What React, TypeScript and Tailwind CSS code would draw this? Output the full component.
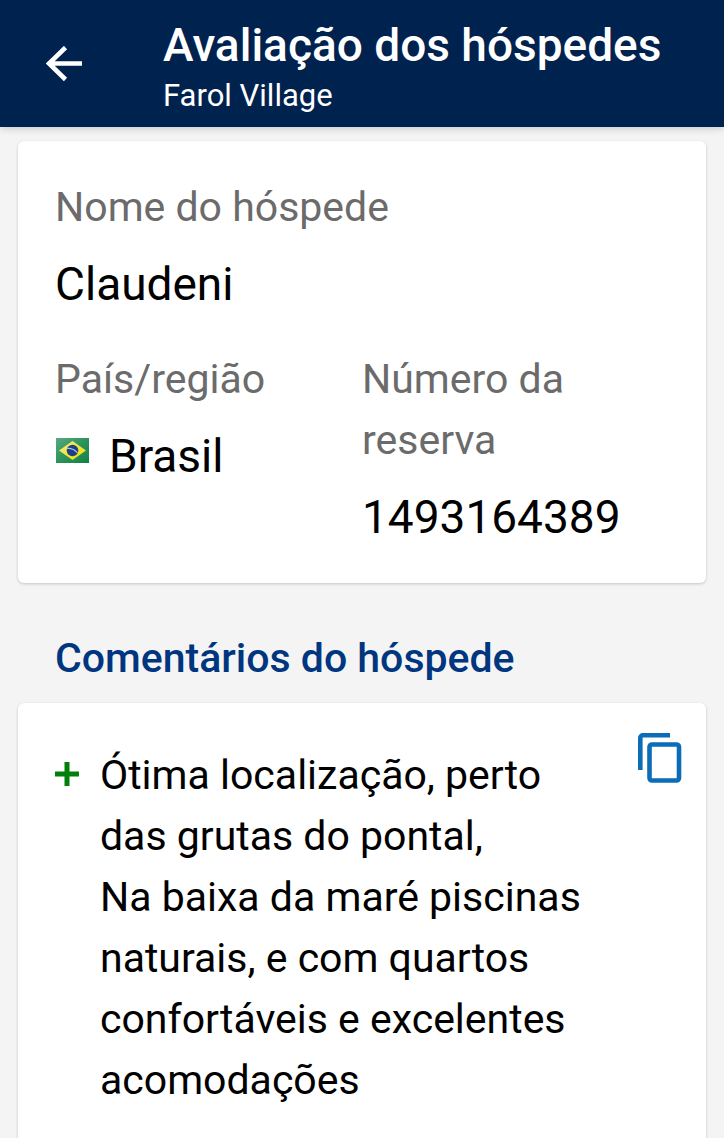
const comments = [
  "Ótima localização, perto das grutas do pontal,",
  "Na baixa da maré piscinas naturais, e com quartos confortáveis e excelentes acomodações",
];

function BackIcon() {
  return (
    <svg viewBox="0 0 36 36" className="h-9 w-9" fill="none" stroke="currentColor" strokeWidth="4.6">
      <path d="M36 17.5H3M19.5 1.5 3 17.5l16.500 16" />
    </svg>
  );
}

function CopyIcon() {
  return (
    <svg viewBox="0 0 44 52" className="h-[52px] w-11" fill="none" stroke="currentColor" strokeWidth="4.600">
      <path d="M2.300 37V4.800a2.500 2.500 0 0 1 2.500-2.500H32" />
      <rect x="11.500" y="11.500" width="29.500" height="36" rx="2.500" />
    </svg>
  );
}

function BrazilFlag() {
  return (
    <svg viewBox="0 0 34 25" className="mt-3 h-[25px] w-[34px] shrink-0">
      <defs>
        <linearGradient id="flag-green" x1="0" y1="0" x2="1" y2="1">
          <stop offset="0" stopColor="#5aa982" />
          <stop offset="0.5" stopColor="#2c935a" />
          <stop offset="1" stopColor="#138048" />
        </linearGradient>
        <linearGradient id="flag-yellow" x1="0" y1="0" x2="1" y2="1">
          <stop offset="0" stopColor="#f3ee82" />
          <stop offset="1" stopColor="#ecd900" />
        </linearGradient>
      </defs>
      <rect x="1" width="33" height="25" fill="url(#flag-green)" />
      <path d="M4 12.500 17.500 3 31 12.500 17.500 22z" fill="url(#flag-yellow)" />
      <circle cx="17.500" cy="12.500" r="5.800" fill="#1d3f87" />
      <path d="M12 10.500q6.500-.5 10.500 4.500" stroke="#a9c3dc" strokeWidth="1.200" fill="none" />
    </svg>
  );
}

export default function App() {
  return (
    <div className="flex min-h-screen flex-col bg-[#f4f4f4] font-[Roboto,sans-serif] text-black">
      <header className="flex h-[127px] items-center bg-[#00224f] pr-6 pl-[46px] text-white shadow-[0_1px_8px_rgba(0,0,0,0.2)]">
        <button type="button" aria-label="Voltar" className="mr-[81px] shrink-0">
          <BackIcon />
        </button>
        <div className="pt-3">
          <h1 className="text-[46px] leading-[52px] font-medium">Avaliação dos hóspedes</h1>
          <p className="text-[31px] leading-[50px]">Farol Village</p>
        </div>
      </header>

      <main className="flex flex-1 flex-col px-[18px] pt-[14px]">
        <section className="rounded-md bg-white px-[37px] pt-9 pb-[35px] shadow-[0_1px_3px_rgba(0,0,0,0.2)]">
          <dl>
            <dt className="text-[41px] leading-[61px] text-[#6b6b6b]">Nome do hóspede</dt>
            <dd className="mt-4 text-[46px] leading-[61px]">Claudeni</dd>
          </dl>
          <dl className="mt-[34px] grid grid-cols-2">
            <div>
              <dt className="text-[41px] leading-[61px] text-[#6b6b6b]">País/região</dt>
              <dd className="mt-4 flex gap-5 text-[46px] leading-[61px]">
                <BrazilFlag />
                Brasil
              </dd>
            </div>
            <div>
              <dt className="text-[41px] leading-[61px] text-[#6b6b6b]">Número da reserva</dt>
              <dd className="mt-4 text-[46px] leading-[61px]">1493164389</dd>
            </div>
          </dl>
        </section>

        <h2 className="mt-[45px] px-[37px] text-[41px] leading-[61px] font-medium text-[#003580]">
          Comentários do hóspede
        </h2>

        <section className="mt-[14px] flex flex-1 items-start rounded-t-md bg-white pt-[30px] pr-6 pb-8 pl-[37px] shadow-[0_1px_3px_rgba(0,0,0,0.2)]">
          <svg viewBox="0 0 24 24" className="mt-[29px] mr-[21px] h-6 w-6 shrink-0" stroke="#008009" strokeWidth="5">
            <path d="M12 0v24M0 12h24" />
          </svg>
          <div className="mt-3 flex-1 pr-10 text-[41px] leading-[61px]">
            {comments.map((line) => (
              <p key={line}>{line}</p>
            ))}
          </div>
          <button type="button" aria-label="Copiar comentário" className="shrink-0 text-[#0b6cb8]">
            <CopyIcon />
          </button>
        </section>
      </main>
    </div>
  );
}
